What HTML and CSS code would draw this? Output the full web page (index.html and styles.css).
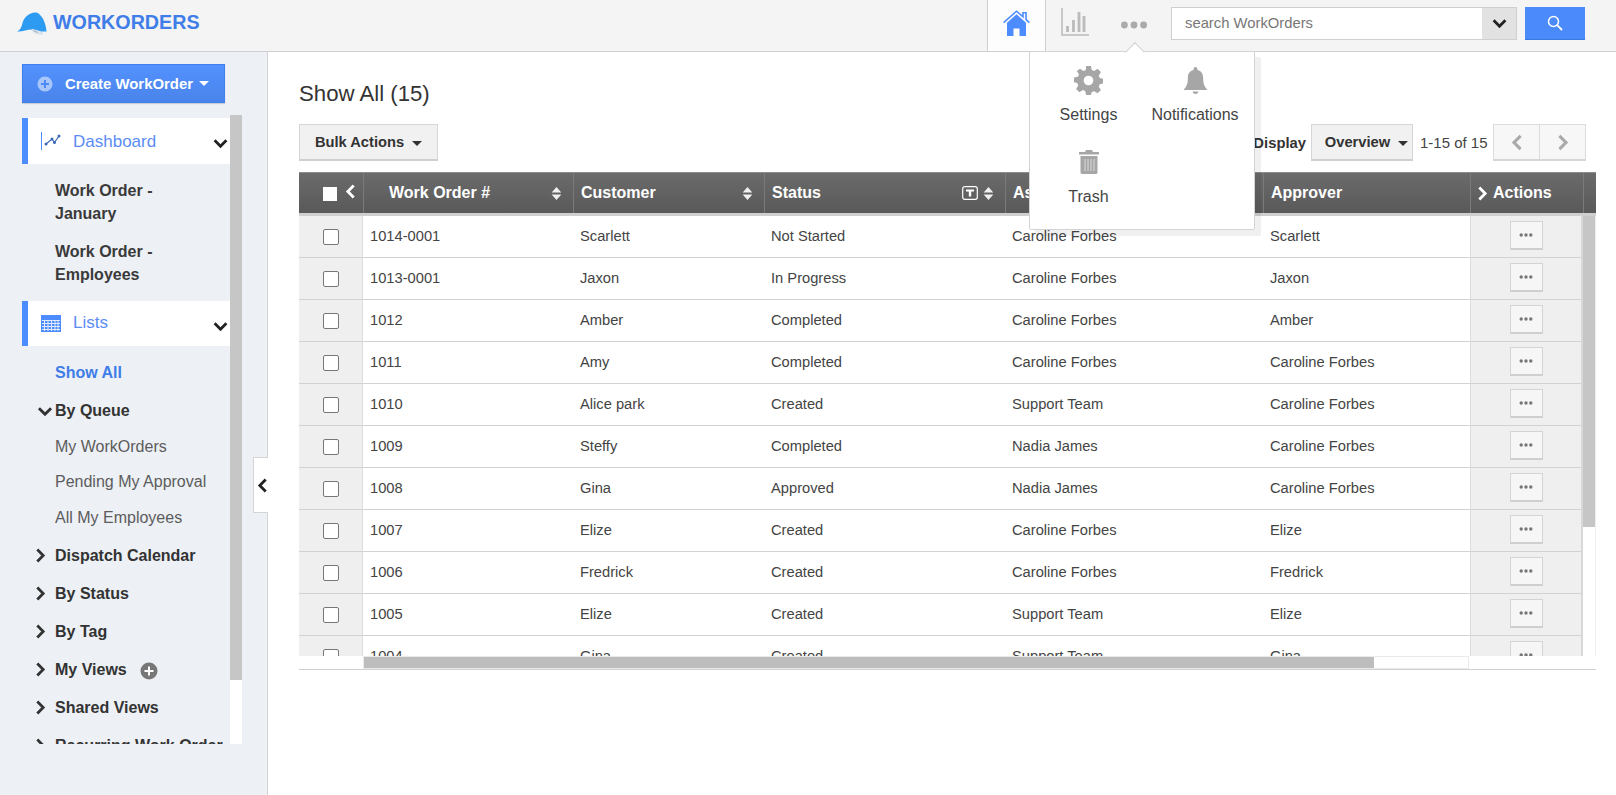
FILE: index.html
```html
<!DOCTYPE html>
<html lang="en">
<head>
<meta charset="utf-8">
<title>WorkOrders</title>
<link rel="stylesheet" href="styles.css">
</head>
<body>
<svg class="defs" width="0" height="0" aria-hidden="true">
  <symbol id="chev-r" viewBox="0 0 10 14"><path d="M2 1.500 7.500 7 2 12.500" fill="none" stroke="currentColor" stroke-width="2.600"/></symbol>
  <symbol id="chev-l" viewBox="0 0 10 14"><path d="M8 1.500 2.500 7 8 12.500" fill="none" stroke="currentColor" stroke-width="2.600"/></symbol>
  <symbol id="chev-d" viewBox="0 0 14 10"><path d="M1.500 2 7 7.500 12.500 2" fill="none" stroke="currentColor" stroke-width="2.600"/></symbol>
  <symbol id="sort" viewBox="0 0 10 14"><path d="M5 1 9.500 6H.500ZM.500 8H9.500L5 13Z" fill="currentColor"/></symbol>
  <symbol id="dots" viewBox="0 0 14 4"><circle cx="2.200" cy="2" r="1.700" fill="currentColor"/><circle cx="7" cy="2" r="1.700" fill="currentColor"/><circle cx="11.800" cy="2" r="1.700" fill="currentColor"/></symbol>
</svg>

<header class="topbar">
  <div class="brand">
    <svg class="cap" viewBox="0 0 31 24"><path d="M0 19.500C3 18.500 4.500 15 5.500 11 7 5 12 1 18 .5c2 0 3.500.5 4.500 2C26 5 29 12 29.500 19.500H24c-3-1-6-2-9-2C10 17.500 5 20 0 19.500Z" fill="#2e9bf2"/><path d="M15 17c2 0 4 1 6 2s4 1 5 1v2.500c-3 .5-6 0-8-1s-3-2.500-3-4.500Z" fill="#dbe2e8"/><path d="M16 18.500c2 .5 3 1.500 5 2" fill="none" stroke="#8fa3b5" stroke-width=".8"/></svg>
    <span class="brand-name">WORKORDERS</span>
  </div>
  <nav class="topnav">
    <a class="tab tab-active" aria-label="Home">
      <svg class="home" viewBox="0 0 27 26"><path d="M.6 12.600 13.500 1.200 20 6.800V2.800h3v6.800l3.400 3" fill="none" stroke="#4d8cff" stroke-width="1.600"/><path d="M13.500 4.200 23 12.800V26h-6.500v-7.500h-6V26H4V12.800Z" fill="#4d8cff"/></svg>
    </a>
    <a class="tab tab-chart" aria-label="Reports">
      <svg class="chart" viewBox="0 0 28 28"><path d="M1 0V27H28" fill="none" stroke="#bbb" stroke-width="1.500"/><path d="M6.500 18v6M12.500 12v12M18 4v20M23 8v16" fill="none" stroke="#bbb" stroke-width="2.800"/></svg>
    </a>
    <a class="tab tab-more" aria-label="More">
      <svg class="more" viewBox="0 0 14 4"><use href="#dots"/></svg>
    </a>
  </nav>
  <div class="search">
    <div class="search-box">
      <span class="search-input">search WorkOrders</span>
      <span class="search-drop"><svg class="i14" viewBox="0 0 14 10"><use href="#chev-d"/></svg></span>
    </div>
    <button class="search-btn" aria-label="Search">
      <svg class="glass" viewBox="0 0 16 16"><circle cx="6.500" cy="6.500" r="5" fill="none" stroke="#fff" stroke-width="1.500"/><path d="M10.200 10.200 15 15" stroke="#fff" stroke-width="1.800"/></svg>
    </button>
  </div>
</header>

<div class="page">
  <aside class="sidebar">
    <button class="create">
      <svg class="plus" viewBox="0 0 16 16"><circle cx="8" cy="8" r="7.500" fill="#a9c6fb"/><path d="M8 4v8M4 8h8" stroke="#4d8af5" stroke-width="2"/></svg>
      <span>Create WorkOrder</span><i class="caret caret-w"></i>
    </button>
    <div class="side-scroll">
      <div class="side-list">
        <div class="section">
          <svg class="sec-ico" viewBox="0 0 20 20"><path d="M.5 1v18" stroke="#4d8cff" stroke-width="1"/><path d="M5 13 11 8l2.500 3.500L18 5" fill="none" stroke="#3c69b8" stroke-width="1.200"/><circle cx="5" cy="13" r="1.500" fill="#3c69b8"/><circle cx="11" cy="8" r="1.500" fill="#3c69b8"/><circle cx="13.500" cy="11.500" r="1.500" fill="#3c69b8"/><circle cx="18" cy="5" r="1.500" fill="#3c69b8"/></svg>
          <span class="sec-name">Dashboard</span>
          <svg class="sec-chev" viewBox="0 0 14 10"><use href="#chev-d"/></svg>
        </div>
        <a class="report">Work Order - January</a>
        <a class="report">Work Order - Employees</a>
        <div class="section section-lists">
          <svg class="sec-ico" viewBox="0 0 20 18"><rect x="0" y="0" width="20" height="17" fill="#4d8cff"/><path d="M1 5.500h18M1 8.500h18M1 11.500h18M1 14.500h18M3.500 5v11M7 5v11M10.500 5v11M14 5v11M17 5v11" stroke="#dfe9fb" stroke-width="1"/></svg>
          <span class="sec-name sec-name-up">Lists</span>
          <svg class="sec-chev" viewBox="0 0 14 10"><use href="#chev-d"/></svg>
        </div>
        <a class="nav-current">Show All</a>
        <a class="nav-group nav-open"><svg class="gchev-d" viewBox="0 0 14 10"><use href="#chev-d"/></svg>By Queue</a>
        <a class="nav-sub nav-sub-first">My WorkOrders</a>
        <a class="nav-sub">Pending My Approval</a>
        <a class="nav-sub nav-sub-last">All My Employees</a>
        <a class="nav-group"><svg class="gchev" viewBox="0 0 10 14"><use href="#chev-r"/></svg>Dispatch Calendar</a>
        <a class="nav-group"><svg class="gchev" viewBox="0 0 10 14"><use href="#chev-r"/></svg>By Status</a>
        <a class="nav-group"><svg class="gchev" viewBox="0 0 10 14"><use href="#chev-r"/></svg>By Tag</a>
        <a class="nav-group"><svg class="gchev" viewBox="0 0 10 14"><use href="#chev-r"/></svg>My Views<svg class="addview" viewBox="0 0 18 18"><circle cx="9" cy="9" r="8.500" fill="#777"/><path d="M9 4.500v9M4.500 9h9" stroke="#fff" stroke-width="2"/></svg></a>
        <a class="nav-group"><svg class="gchev" viewBox="0 0 10 14"><use href="#chev-r"/></svg>Shared Views</a>
        <a class="nav-group"><svg class="gchev" viewBox="0 0 10 14"><use href="#chev-r"/></svg>Recurring Work Order</a>
      </div>
      <div class="side-track"><div class="side-thumb"></div></div>
    </div>
    <button class="collapse" aria-label="Collapse"><svg viewBox="0 0 10 14"><use href="#chev-l"/></svg></button>
  </aside>

  <main class="main">
    <h1 class="title">Show All (15)</h1>
    <div class="toolbar">
      <button class="btn bulk">Bulk Actions<i class="caret"></i></button>
      <div class="tools-right">
        <span class="display-label">Display</span>
        <button class="btn overview">Overview<i class="caret"></i></button>
        <span class="count">1-15 of 15</span>
        <div class="pager">
          <button class="page-btn" aria-label="Previous"><svg viewBox="0 0 10 14"><use href="#chev-l"/></svg></button>
          <button class="page-btn" aria-label="Next"><svg viewBox="0 0 10 14"><use href="#chev-r"/></svg></button>
        </div>
      </div>
    </div>

    <div class="grid">
      <div class="row head">
        <div class="hc hc-check"><span class="head-check"></span><svg class="hchev" viewBox="0 0 10 14"><use href="#chev-l"/></svg></div>
        <div class="hc hc-wo"><span>Work Order #</span><svg class="sort" viewBox="0 0 10 14"><use href="#sort"/></svg></div>
        <div class="hc"><span>Customer</span><svg class="sort" viewBox="0 0 10 14"><use href="#sort"/></svg></div>
        <div class="hc"><span>Status</span><span class="filter-group"><svg class="filter" viewBox="0 0 16 14"><rect x="0.700" y="0.700" width="14.600" height="12.600" rx="2" fill="none" stroke="#fff" stroke-width="1.200"/><path d="M4 3.500h8v2H9.200v5H6.800v-5H4Z" fill="#fff"/></svg><svg class="sort" viewBox="0 0 10 14"><use href="#sort"/></svg></span></div>
        <div class="hc"><span>Assigned To</span></div>
        <div class="hc"><span>Approver</span></div>
        <div class="hc hc-act"><svg class="hchev" viewBox="0 0 10 14"><use href="#chev-r"/></svg><span>Actions</span></div>
        <div class="hc hc-end"></div>
      </div>
      <div class="body">
        <div class="rows">
          <div class="row"><div class="c c-check"><span class="check"></span></div><div class="c">1014-0001</div><div class="c">Scarlett</div><div class="c">Not Started</div><div class="c">Caroline Forbes</div><div class="c">Scarlett</div><div class="c c-act"><button class="act"><svg viewBox="0 0 14 4"><use href="#dots"/></svg></button></div></div>
          <div class="row"><div class="c c-check"><span class="check"></span></div><div class="c">1013-0001</div><div class="c">Jaxon</div><div class="c">In Progress</div><div class="c">Caroline Forbes</div><div class="c">Jaxon</div><div class="c c-act"><button class="act"><svg viewBox="0 0 14 4"><use href="#dots"/></svg></button></div></div>
          <div class="row"><div class="c c-check"><span class="check"></span></div><div class="c">1012</div><div class="c">Amber</div><div class="c">Completed</div><div class="c">Caroline Forbes</div><div class="c">Amber</div><div class="c c-act"><button class="act"><svg viewBox="0 0 14 4"><use href="#dots"/></svg></button></div></div>
          <div class="row"><div class="c c-check"><span class="check"></span></div><div class="c">1011</div><div class="c">Amy</div><div class="c">Completed</div><div class="c">Caroline Forbes</div><div class="c">Caroline Forbes</div><div class="c c-act"><button class="act"><svg viewBox="0 0 14 4"><use href="#dots"/></svg></button></div></div>
          <div class="row"><div class="c c-check"><span class="check"></span></div><div class="c">1010</div><div class="c">Alice park</div><div class="c">Created</div><div class="c">Support Team</div><div class="c">Caroline Forbes</div><div class="c c-act"><button class="act"><svg viewBox="0 0 14 4"><use href="#dots"/></svg></button></div></div>
          <div class="row"><div class="c c-check"><span class="check"></span></div><div class="c">1009</div><div class="c">Steffy</div><div class="c">Completed</div><div class="c">Nadia James</div><div class="c">Caroline Forbes</div><div class="c c-act"><button class="act"><svg viewBox="0 0 14 4"><use href="#dots"/></svg></button></div></div>
          <div class="row"><div class="c c-check"><span class="check"></span></div><div class="c">1008</div><div class="c">Gina</div><div class="c">Approved</div><div class="c">Nadia James</div><div class="c">Caroline Forbes</div><div class="c c-act"><button class="act"><svg viewBox="0 0 14 4"><use href="#dots"/></svg></button></div></div>
          <div class="row"><div class="c c-check"><span class="check"></span></div><div class="c">1007</div><div class="c">Elize</div><div class="c">Created</div><div class="c">Caroline Forbes</div><div class="c">Elize</div><div class="c c-act"><button class="act"><svg viewBox="0 0 14 4"><use href="#dots"/></svg></button></div></div>
          <div class="row"><div class="c c-check"><span class="check"></span></div><div class="c">1006</div><div class="c">Fredrick</div><div class="c">Created</div><div class="c">Caroline Forbes</div><div class="c">Fredrick</div><div class="c c-act"><button class="act"><svg viewBox="0 0 14 4"><use href="#dots"/></svg></button></div></div>
          <div class="row"><div class="c c-check"><span class="check"></span></div><div class="c">1005</div><div class="c">Elize</div><div class="c">Created</div><div class="c">Support Team</div><div class="c">Elize</div><div class="c c-act"><button class="act"><svg viewBox="0 0 14 4"><use href="#dots"/></svg></button></div></div>
          <div class="row"><div class="c c-check"><span class="check"></span></div><div class="c">1004</div><div class="c">Gina</div><div class="c">Created</div><div class="c">Support Team</div><div class="c">Gina</div><div class="c c-act"><button class="act"><svg viewBox="0 0 14 4"><use href="#dots"/></svg></button></div></div>
        </div>
        <div class="v-track"><div class="v-thumb"></div></div>
      </div>
      <div class="h-track"><div class="h-thumb"></div></div>
    </div>
  </main>
</div>

<div class="popup">
  <a class="pop-item">
    <svg class="pop-ico gear" viewBox="0 0 24 24"><path fill="#a6a6a6" fill-rule="evenodd" d="M10 0h4l.7 3.300 2 .8L19.500 2.300 22.300 5l-1.800 2.900.8 2 3.300.7v3.800l-3.300.7-.8 2 1.800 2.800-2.800 2.700-2.800-1.800-2 .8L14 24h-4l-.7-3.300-2-.8-2.800 1.800L1.700 19l1.800-2.900-.8-2L0 13.400V9.600l3.300-.7.800-2L2.300 4.100 5 2.300l2.800 1.800 2-.8ZM12 8a4 4 0 1 0 0 8 4 4 0 0 0 0-8Z"/></svg>
    <span>Settings</span>
  </a>
  <a class="pop-item">
    <svg class="pop-ico bell" viewBox="0 0 24 28"><path fill="#a6a6a6" d="M12 0c1.200 0 2 .8 2 2v1c4 1 6 4 6 8 0 6 1 9 4 12v1H0v-1c3-3 4-6 4-12 0-4 2-7 6-8V2c0-1.200.8-2 2-2ZM9 25.500h6c0 1.500-1.300 2.500-3 2.500s-3-1-3-2.500Z"/></svg>
    <span>Notifications</span>
  </a>
  <a class="pop-item pop-trash">
    <svg class="pop-ico trash" viewBox="0 0 20 24"><path fill="#a6a6a6" d="M7 0h6l1 2h6v2.500H0V2h6ZM1.500 6h17v16.500c0 .8-.7 1.500-1.500 1.500H3c-.8 0-1.500-.7-1.500-1.500Z"/><path d="M6 9v12M9 9v12M12 9v12M15 9v12" stroke="#dcdcdc" stroke-width="1"/></svg>
    <span>Trash</span>
  </a>
</div>
```

FILE: styles.css
```css
* { box-sizing: border-box; }
html, body { margin: 0; height: 100%; }
body {
  width: 1616px; height: 795px; overflow: hidden; position: relative;
  font-family: "Liberation Sans", Arial, sans-serif; font-size: 14.7px; color: #333; background: #fff;
}
button { font-family: inherit; cursor: pointer; }
a { color: inherit; text-decoration: none; }
.defs { position: absolute; }

.topbar {
  height: 52px; background: #f4f4f4; border-bottom: 1px solid #cfcfcf;
  display: flex; align-items: flex-start;
}
.brand { display: flex; align-items: flex-start; padding: 12px 0 0 17px; width: 987px; }
.cap { width: 31px; height: 24px; }
.brand-name { color: #3f7de8; font-weight: 700; font-size: 19.700px; line-height: 20px; margin: 0 0 0 5px; }
.topnav { display: flex; height: 51px; width: 184px; }
.tab { display: flex; align-items: center; justify-content: center; height: 51px; }
.tab-active { width: 59px; background: #fdfdfd; border-left: 1px solid #cfcfcf; border-right: 1px solid #cfcfcf; }
.home { width: 27px; height: 26px; margin-bottom: 5px; }
.chart { width: 28px; height: 28px; margin-bottom: 7px; }
.tab-chart { width: 58px; }
.tab-more { width: 44px; justify-content: flex-start; padding-left: 16px; }
.more { width: 28px; height: 8px; color: #aaa; margin-bottom: 2px; }
.search { display: flex; gap: 8px; padding-top: 7px; }
.search-box { width: 346px; height: 33px; border: 1px solid #cfcfcf; background: #fff; display: flex; }
.search-input { flex: 1; padding: 0 13px; line-height: 31px; color: #777; font-size: 14.800px; }
.search-drop { width: 34px; background: #e2e2e2; display: flex; align-items: center; justify-content: center; color: #222; }
.i14 { width: 15px; height: 11px; }
.search-btn { width: 60px; height: 33px; border: 0; border-bottom: 1px solid #3a78e0; background: #4a8afa; display: flex; align-items: center; justify-content: center; padding: 0; }
.glass { width: 16px; height: 16px; }

.page { display: flex; height: 743px; }
.sidebar { width: 268px; flex: none; height: 743px; background: #edf0f5; border-right: 1px solid #d4d4d4; padding: 12px 0 0 22px; position: relative; }
.create {
  width: 203px; height: 39px; border: 1px solid #3f80f0; background: linear-gradient(#5291ff, #4a84ea);
  color: #fff; font-weight: 700; font-size: 14.900px; display: flex; align-items: center; padding: 0 0 0 14px;
  box-shadow: 0 1px 1px rgba(0,0,0,.15);
}
.plus { width: 16px; height: 16px; margin-right: 12px; }
.caret { display: inline-block; border: 5px solid transparent; border-top-color: #333; border-bottom: 0; margin-left: 6px; vertical-align: middle; }
.caret-w { border-top-color: #fff; }
.side-scroll { position: relative; width: 220px; height: 629px; margin-top: 12px; overflow: hidden; }
.side-list { width: 208px; padding-top: 3px; }
.section { height: 46px; background: #fff; border-left: 6px solid #4d8cff; display: flex; align-items: center; padding-left: 13px; position: relative; }
.section-lists { height: 45px; margin-top: 15px; }
.sec-ico { width: 20px; height: 20px; }
.sec-name { color: #5b8cf5; font-size: 17px; margin: 2px 0 0 12px; }
.sec-name-up { margin-top: -2px; }
.sec-chev { position: absolute; right: 2px; top: 20px; width: 15px; height: 11px; color: #222; }
.report { display: block; width: 150px; margin: 15px 0 0 33px; font-weight: 700; font-size: 16px; line-height: 23px; color: #3a3a3a; }
.nav-current { display: block; margin: 16px 0 0 33px; color: #3f7de8; font-weight: 700; font-size: 16px; line-height: 22px; }
.nav-group { display: block; position: relative; margin: 16px 0 0 33px; font-weight: 700; font-size: 16px; line-height: 22px; color: #333; white-space: nowrap; }
.nav-sub { display: block; margin: 13px 0 0 33px; font-size: 16px; line-height: 22px; color: #5c5c5c; }
.nav-sub-first { margin-top: 14px; }
.nav-sub-last { margin-top: 14px; }
.gchev { position: absolute; left: -20px; top: 3px; width: 11px; height: 15px; color: #333; }
.gchev-d { position: absolute; left: -18px; top: 6px; width: 16px; height: 11px; color: #333; }
.addview { width: 18px; height: 18px; margin-left: 13px; vertical-align: -5px; }
.side-track { position: absolute; right: 0; top: 0; width: 12px; height: 100%; background: #fff; }
.side-thumb { height: 565px; background: #c6c6c6; }
.collapse { position: absolute; right: -1px; top: 405px; width: 15px; height: 56px; background: #fff; border: 1px solid #d4d4d4; border-right: 0; padding: 0; display: flex; align-items: center; justify-content: center; color: #222; }
.collapse svg { width: 11px; height: 15px; margin-left: 3px; }

.main { flex: 1; padding: 0 20px 0 31px; min-width: 0; }
.title { margin: 0; padding-top: 29px; font-weight: 400; font-size: 22.200px; line-height: 26px; color: #333; }
.toolbar { display: flex; justify-content: space-between; align-items: flex-start; margin-top: 17px; height: 48px; padding-right: 10px; }
.btn { height: 37px; background: #f1f1f1; border: 1px solid #d6d6d6; border-bottom: 2px solid #cfcfcf; font-weight: 700; font-size: 14.700px; color: #333; padding: 0; }
.bulk { width: 139px; }
.btn .caret { margin-left: 8px; }
.tools-right { display: flex; align-items: center; height: 37px; }
.display-label { font-weight: 700; font-size: 14.800px; color: #333; margin-right: 5px; }
.overview { width: 102px; padding-left: 9px; }
.count { margin-left: 7px; color: #444; font-size: 15px; width: 73px; }
.pager { display: flex; }
.page-btn { width: 47px; height: 37px; background: #f7f7f7; border: 1px solid #dcdcdc; border-bottom: 2px solid #d6d6d6; padding: 0; color: #aaa; display: flex; align-items: center; justify-content: center; }
.page-btn + .page-btn { margin-left: -1px; }
.page-btn svg { width: 12px; height: 17px; }

.grid { width: 1297px; border-bottom: 1px solid #cfcfcf; height: 498px; }
.row { display: grid; grid-template-columns: 64px 210px 191px 241px 258px 207px 113px; height: 42px; }
.head { grid-template-columns: 64px 210px 191px 241px 258px 207px 113px 13px; height: 44px; background: linear-gradient(#6b6b6b, #595959); border-top: 1px solid #8c8c8c; border-bottom: 3px solid #cfcfcf; width: 1297px; }
.hc { display: flex; align-items: center; justify-content: space-between; color: #fff; font-weight: 700; font-size: 16px; padding: 0 11px 0 7px; border-left: 1px solid #7a7a7a; }
.hc:first-child { border-left: 0; }
.hc-check { justify-content: flex-start; padding: 0 0 0 24px; gap: 8px; }
.head-check { width: 14px; height: 14px; background: #fff; display: block; margin-top: 1px; }
.hchev { width: 11px; height: 15px; color: #fff; margin-top: -3px; flex: none; }
.hc-wo { padding-left: 25px; }
.hc-act { justify-content: flex-start; gap: 5px; padding-left: 6px; }
.hc-act .hchev { margin-top: 0; }
.sort { width: 11px; height: 15px; color: #f0f0f0; }
.filter-group { display: flex; align-items: center; gap: 5px; }
.filter { width: 16px; height: 14px; }

.body { height: 440px; overflow: hidden; position: relative; }
.rows { width: 1284px; }
.c { border-bottom: 1px solid #d2d2d2; padding-left: 7px; line-height: 41px; font-size: 14.700px; color: #444; white-space: nowrap; }
.c-check { background: #efefef; border-right: 1px solid #ddd; padding: 0; display: flex; align-items: center; justify-content: center; }
.check { width: 16px; height: 16px; border: 1px solid #777; border-radius: 2px; background: #fff; display: block; }
.c-act { background: #efefef; border-left: 1px solid #ddd; border-right: 2px solid #d8d8d8; padding: 0; display: flex; align-items: center; justify-content: center; }
.act { width: 33px; height: 29px; background: #f6f6f6; border: 1px solid #d4d4d4; border-bottom: 2px solid #cfcfcf; padding: 0; color: #777; display: flex; align-items: center; justify-content: center; margin-top: -3px; }
.act svg { width: 14px; height: 4px; }
.v-track { position: absolute; right: 0; top: 0; width: 13px; height: 100%; background: #fff; border-right: 1px solid #eee; }
.v-thumb { width: 12px; height: 311px; background: #c6c6c6; }
.h-track { margin-left: 64px; width: 1106px; height: 13px; background: #fff; border: 1px solid #eaeaea; }
.h-thumb { width: 1010px; height: 100%; background: #bdbdbd; }

.popup {
  position: absolute; left: 1029px; top: 51px; width: 226px; height: 179px; background: #fff;
  border: 1px solid #d4d4d4; border-radius: 2px; box-shadow: 6px 6px 0 rgba(0,0,0,.06);
  display: grid; grid-template-columns: 117px 96px; grid-auto-rows: 84px; padding-top: 14px; z-index: 5;
}
.popup::before {
  content: ""; position: absolute; left: 98px; top: -7px; width: 13px; height: 13px; background: #fff;
  border-left: 1px solid #d0d0d0; border-top: 1px solid #d0d0d0; transform: rotate(45deg);
}
.pop-item { display: flex; flex-direction: column; align-items: center; font-size: 16px; color: #444; height: 84px; white-space: nowrap; }
.pop-item span { margin-top: 10px; line-height: 20px; }
.gear { width: 29px; height: 29px; }
.bell { width: 23px; height: 29px; }
.pop-trash { grid-row: 2; }
.trash { width: 20px; height: 24px; }
.pop-trash span { margin-top: 13px; }
```
